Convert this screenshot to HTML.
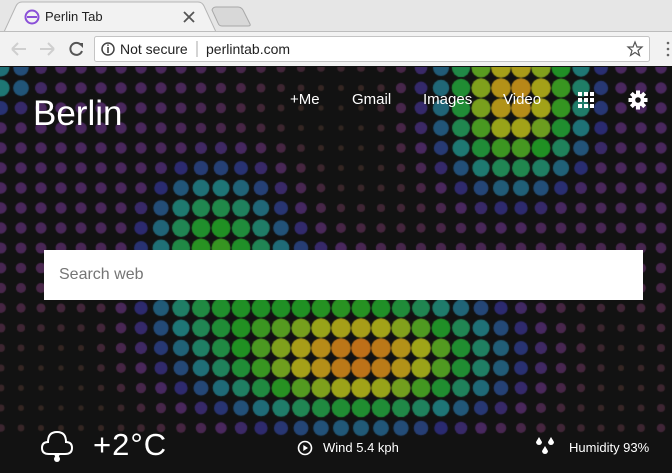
<!DOCTYPE html>
<html><head><meta charset="utf-8">
<style>
*{margin:0;padding:0;box-sizing:border-box}
body{width:672px;height:473px;overflow:hidden;background:#121212;font-family:"Liberation Sans",sans-serif;position:relative}
#tabs{position:absolute;left:0;top:0;width:672px;height:32px;background:#e6e6e6}
#tb{position:absolute;left:0;top:31px;width:672px;height:35px;background:#f2f2f2;border-top:1px solid #bdbdbd}
#page{position:absolute;left:0;top:67px;width:672px;height:406px;background:#121212}
canvas{position:absolute;left:0;top:0}
.w{color:#fff;position:absolute;white-space:nowrap}
</style></head><body>
<div id="tabs">
<svg width="672" height="32" style="position:absolute;left:0;top:0">
<path d="M4 32 L16 6 Q18 2 22 2 L198 2 Q202 2 204 6 L216 32 Z" fill="#f2f2f2" stroke="#b5b5b5"/>
<path d="M212 10 Q213 7 216 7 L238 7 Q241 7 243 10 L250 24 Q251 26 248 26 L222 26 Q219 26 218 23 Z" fill="#d8d8d8" stroke="#a8a8a8"/>
<circle cx="32" cy="17" r="6.5" fill="none" stroke="#8a4fd8" stroke-width="2"/>
<path d="M27 17 H37" stroke="#8a4fd8" stroke-width="2"/>
<path d="M184 12 L194 22 M194 12 L184 22" stroke="#555" stroke-width="1.8"/>
</svg>
<div style="position:absolute;left:45px;top:9px;font-size:13px;color:#222">Perlin Tab</div>
</div>
<div id="tb">
<svg width="672" height="35" style="position:absolute;left:0;top:0">
<path d="M12 17 H26 M12 17 L18 11 M12 17 L18 23" stroke="#cfcfcf" stroke-width="2" fill="none"/>
<path d="M54 17 H40 M54 17 L48 11 M54 17 L48 23" stroke="#cfcfcf" stroke-width="2" fill="none"/>
<path d="M81 13 A6 6 0 1 0 82 19" stroke="#555" stroke-width="2" fill="none"/>
<path d="M78 11 L83 11 L83 16 Z" fill="#555"/>
<rect x="94.5" y="4.5" width="555" height="25" rx="2" fill="#fff" stroke="#c4c4c4"/>
<circle cx="108" cy="17" r="6" fill="none" stroke="#444" stroke-width="1.5"/>
<path d="M108 15 V21 M108 12.5 V13.8" stroke="#444" stroke-width="1.6"/>
<path d="M197 9 V25" stroke="#aaa"/>
<path d="M635 10 L637 15 L642 15 L638 18.5 L639.5 23.5 L635 20.5 L630.5 23.5 L632 18.5 L628 15 L633 15 Z" fill="none" stroke="#555" stroke-width="1.2"/>
<circle cx="668" cy="11" r="1.3" fill="#666"/><circle cx="668" cy="17" r="1.3" fill="#666"/><circle cx="668" cy="23" r="1.3" fill="#666"/>
</svg>
<div style="position:absolute;left:120px;top:9px;font-size:14px;color:#222">Not secure</div>
<div style="position:absolute;left:206px;top:9px;font-size:14px;color:#222">perlintab.com</div>
</div>
<div id="page">
<canvas id="c" width="672" height="406"></canvas>
<div class="w" style="left:33px;top:27px;font-size:35px;">Berlin</div>
<div class="w" style="left:290px;top:24px;font-size:15px;">+Me</div>
<div class="w" style="left:352px;top:24px;font-size:15px;">Gmail</div>
<div class="w" style="left:423px;top:24px;font-size:15px;">Images</div>
<div class="w" style="left:503px;top:24px;font-size:15px;">Video</div>
<svg class="w" style="left:578px;top:25px" width="16" height="16">
<g fill="#fff"><rect x="0" y="0" width="4" height="4"/><rect x="6" y="0" width="4" height="4"/><rect x="12" y="0" width="4" height="4"/><rect x="0" y="6" width="4" height="4"/><rect x="6" y="6" width="4" height="4"/><rect x="12" y="6" width="4" height="4"/><rect x="0" y="12" width="4" height="4"/><rect x="6" y="12" width="4" height="4"/><rect x="12" y="12" width="4" height="4"/></g></svg>
<svg class="w" style="left:628px;top:23px" width="20" height="20" viewBox="0 0 20 20">
<g fill="#fff" transform="translate(10 10)">
<circle r="6.5"/>
<rect x="-2" y="-9.5" width="4" height="19"/>
<rect x="-2" y="-9.5" width="4" height="19" transform="rotate(45)"/>
<rect x="-2" y="-9.5" width="4" height="19" transform="rotate(90)"/>
<rect x="-2" y="-9.5" width="4" height="19" transform="rotate(135)"/>
</g><circle cx="10" cy="10" r="2.8" fill="#121212"/></svg>
<div style="position:absolute;left:44px;top:183px;width:599px;height:50px;background:#fff;"></div>
<div style="position:absolute;left:59px;top:199px;font-size:16px;color:#757575">Search web</div>
<svg class="w" style="left:40px;top:360px" width="34" height="38" viewBox="0 0 34 38">
<path d="M9 27 Q2 27 2 21 Q2 15 8 15 Q8 5 17 5 Q26 5 26 15 Q32 15 32 21 Q32 27 25 27 Z" fill="none" stroke="#fff" stroke-width="2"/>
<path d="M14 27 L17 34 L20 27 Z" fill="#fff"/><circle cx="17" cy="32" r="3" fill="#fff"/>
</svg>
<div class="w" style="left:93px;top:360px;font-size:31px;letter-spacing:1px">+2°C</div>
<svg class="w" style="left:297px;top:373px" width="16" height="16"><circle cx="8" cy="8" r="6.5" fill="none" stroke="#fff" stroke-width="1.6"/><path d="M6.3 5 L11 8 L6.3 11 Z" fill="#fff"/></svg>
<div class="w" style="left:323px;top:373px;font-size:13px;">Wind 5.4 kph</div>
<svg class="w" style="left:535px;top:369px" width="22" height="22"><g fill="#fff"><path d="M4 1 L7 6 A3 3 0 1 1 1 6 Z"/><path d="M16 1 L19 6 A3 3 0 1 1 13 6 Z"/><path d="M10 10 L13 15 A3 3 0 1 1 7 15 Z"/></g></svg>
<div class="w" style="left:569px;top:373px;font-size:13px;">Humidity 93%</div>
</div>
<script>
var c=document.getElementById('c').getContext('2d');
function g(x,y,cx,cy,sx,sy,a){var dx=x-cx,dy=y-cy;return a*Math.exp(-(dx*dx/(2*sx*sx)+dy*dy/(2*sy*sy)));}
var stops=[[0,[38,36,28],1.8],[0.12,[52,38,34],3],[0.22,[70,38,64],4.8],[0.32,[74,40,94],5.8],[0.42,[42,42,112],6.8],[0.5,[34,80,120],7.8],[0.58,[30,118,118],8.6],[0.66,[32,134,80],9],[0.74,[32,144,34],9.5],[0.82,[96,156,32],9.5],[0.88,[160,164,24],9.8],[0.94,[180,144,24],9.8],[1,[192,104,24],9.8]];
function col(v){v=Math.max(0,Math.min(1,v));for(var i=1;i<stops.length;i++){if(v<=stops[i][0]){var a=stops[i-1],b=stops[i],t=(v-a[0])/(b[0]-a[0]);return [a[1].map(function(q,k){return Math.round(q+(b[1][k]-q)*t)}),a[2]+(b[2]-a[2])*t];}}var l=stops[stops.length-1];return [l[1],l[2]];}
function so(){var p=1;for(var i=0;i<arguments.length;i++)p*=(1-arguments[i]);return 1-p;}
for(var row=0;row<22;row++){var Y=8+20*row;var y=Y-67;if(y<-12)continue;
for(var k=0;k<35;k++){var x=1+20*k;
var base=0.32-g(x,Y,340,130,75,65,0.25)-g(x,Y,70,390,90,70,0.24)-g(x,Y,610,380,70,80,0.2)-g(x,Y,430,225,50,40,0.06);
var s=so(g(x,Y,360,357,125,62,1.0),g(x,Y,515,95,70,85,0.96),g(x,Y,215,245,68,80,0.74),g(x,Y,0,80,40,35,0.6),g(x,Y,660,470,40,30,0.4));
var v=Math.max(base,s);
var r=col(v);c.fillStyle='rgb('+r[0].join(',')+')';c.beginPath();c.arc(x,y,r[1],0,7);c.fill();}}
</script>
</body></html>
